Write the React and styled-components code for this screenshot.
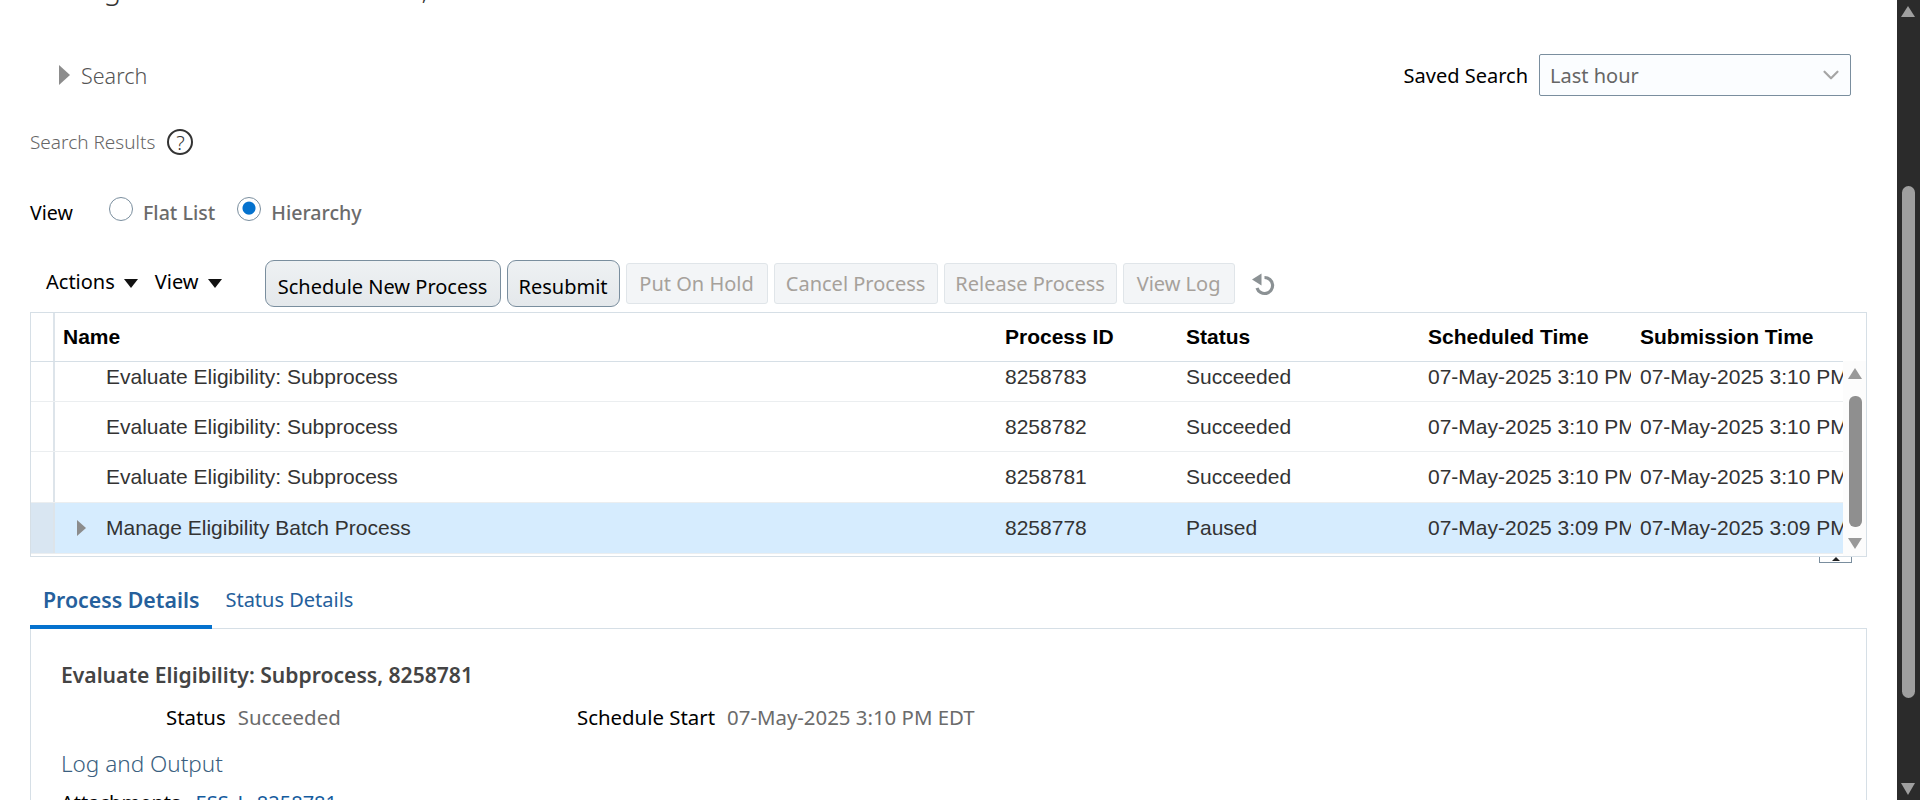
import React from "react";
import styled, { createGlobalStyle } from "styled-components";
import { ChevronDown } from "lucide-react";

const Global = createGlobalStyle`
  html, body {
    margin: 0;
    padding: 0;
    height: 800px;
    overflow: hidden;
    background: #fff;
  }
`;

const uiFont = `"Noto Sans", "Open Sans", sans-serif`;
const tableFont = `"Liberation Sans", Arial, sans-serif`;

const Page = styled.div`
  display: flex;
  width: 1920px;
  height: 800px;
  overflow: hidden;
  font-family: ${uiFont};
  color: #333;
`;

const Main = styled.main`
  flex: 1;
  min-width: 0;
  padding: 0 30px;
  overflow: hidden;
`;

const PageScrollbar = styled.div`
  width: 23px;
  flex: none;
  background: #2b2b2b;
  position: relative;
`;

const ScrollThumb = styled.div`
  position: absolute;
  left: 5px;
  width: 13px;
  top: 186px;
  height: 512px;
  border-radius: 7px;
  background: #9f9f9f;
`;

const ScrollArrow = styled.div`
  position: absolute;
  left: 4px;
  width: 0;
  height: 0;
  border-left: 7.5px solid transparent;
  border-right: 7.5px solid transparent;
  ${(p) =>
    p.$up
      ? "top: 6px; border-bottom: 11px solid #9f9f9f;"
      : "bottom: 5px; border-top: 12px solid #9f9f9f;"}
`;

const PageTitle = styled.h1`
  margin: -33px 0 0;
  height: 41px;
  font-size: 29px;
  font-weight: 300;
  line-height: 41px;
  color: #333;
`;

const SearchBar = styled.div`
  display: flex;
  align-items: center;
  justify-content: space-between;
  height: 42px;
  margin-top: 46px;
  padding: 0 16px 0 29px;
`;

const Disclosure = styled.div`
  display: flex;
  align-items: center;
  gap: 11px;
  font-size: 21.5px;
  font-weight: 300;
  color: #555;
`;

const TriangleRight = styled.span`
  width: 0;
  height: 0;
  border-top: ${(p) => p.$size}px solid transparent;
  border-bottom: ${(p) => p.$size}px solid transparent;
  border-left: ${(p) => p.$size * 1.15}px solid #8c8c8c;
`;

const SavedSearch = styled.div`
  display: flex;
  align-items: center;
  gap: 11px;
  font-size: 20px;
  color: #000;
`;

const SelectBox = styled.div`
  display: flex;
  align-items: center;
  justify-content: space-between;
  box-sizing: border-box;
  width: 312px;
  height: 42px;
  padding: 0 6px 0 10px;
  background: #fbfdff;
  border: 1px solid #7a8e9e;
  border-radius: 2px;
  color: #666;
`;

const ResultsHead = styled.div`
  display: flex;
  align-items: center;
  gap: 12px;
  height: 26px;
  margin-top: 33px;
  font-size: 19px;
  font-weight: 300;
  color: #666;
`;

const HelpIcon = styled.span`
  display: inline-flex;
  align-items: center;
  justify-content: center;
  box-sizing: border-box;
  width: 26px;
  height: 26px;
  border: 2px solid #333;
  border-radius: 50%;
  font-size: 20px;
  font-weight: 300;
  color: #333;
`;

const ViewRow = styled.div`
  display: flex;
  align-items: center;
  height: 30px;
  margin-top: 42px;
  font-size: 19.6px;
`;

const ViewLabel = styled.span`
  width: 79px;
  color: #000;
`;

const Radio = styled.label`
  display: flex;
  align-items: center;
  gap: 10px;
  margin-right: 22px;
  font-weight: 500;
  color: #6b6b6b;
`;

const RadioDot = styled.span`
  box-sizing: border-box;
  width: 24px;
  height: 24px;
  border: 1px solid #7a8e9e;
  border-radius: 50%;
  margin-top: -6px;
  background: ${(p) =>
    p.$checked ? "radial-gradient(circle at 50% 46%, #0572ce 0 6px, #fff 7px)" : "#fff"};
`;

const Toolbar = styled.div`
  display: flex;
  align-items: center;
  height: 47px;
  margin-top: 33px;
`;

const MenuItem = styled.span`
  display: flex;
  align-items: center;
  gap: 9px;
  margin-left: ${(p) => p.$left}px;
  font-size: 20px;
  color: #000;
  margin-top: -4px;
`;

const TriangleDown = styled.span`
  width: 0;
  height: 0;
  border-left: 7px solid transparent;
  border-right: 7px solid transparent;
  border-top: 9px solid #111;
  margin-top: 3px;
`;

const ButtonRow = styled.div`
  display: flex;
  align-items: center;
  gap: 6px;
  margin-left: 43px;
`;

const ActiveButton = styled.button`
  box-sizing: border-box;
  height: 47px;
  width: ${(p) => p.$w}px;
  padding: 5px 0 0;
  background: linear-gradient(#eef1f3, #e4e8eb);
  border: 1px solid #7a8e9e;
  border-radius: 9px;
  font-family: ${uiFont};
  font-size: 20px;
  color: #000;
`;

const DisabledButton = styled.button`
  box-sizing: border-box;
  height: 41px;
  width: ${(p) => p.$w}px;
  padding: 0;
  background: #f3f5f7;
  border: 1px solid #e0e5e9;
  border-radius: 3px;
  font-family: ${uiFont};
  font-size: 20px;
  color: #a6a19b;
`;

const RefreshIcon = styled.svg`
  width: 24px;
  height: 24px;
  margin-left: 10px;
  margin-top: 1px;
`;

const TableBox = styled.section`
  position: relative;
  box-sizing: border-box;
  height: 245px;
  margin-top: 5px;
  border: 1px solid #d6dfe6;
  font-family: ${tableFont};
  font-size: 21px;
`;

const Row = styled.div`
  display: grid;
  grid-template-columns: 24px 950px 181px 242px 212px 1fr;
  box-sizing: border-box;
  height: ${(p) => p.$h}px;
  align-items: center;
  border-bottom: 1px solid ${(p) => (p.$head ? "#d6dfe6" : "#ebeef0")};
  background: ${(p) => (p.$selected ? "#d6ecfe" : "transparent")};
  color: ${(p) => (p.$head ? "#000" : "#333")};
  font-weight: ${(p) => (p.$head ? 700 : 400)};
`;

const Gutter = styled.div`
  align-self: stretch;
  border-right: 2px solid #dde4ea;
  background: ${(p) => (p.$selected ? "#d9e6f2" : "transparent")};
`;

const Cell = styled.div`
  overflow: hidden;
  white-space: nowrap;
  padding-left: ${(p) => p.$pad || 0}px;
  display: flex;
  align-items: center;
  margin-top: ${(p) => p.$shift || 0}px;
  margin-right: ${(p) => p.$clip || 0}px;
`;

const Body = styled.div`
  width: 1812px;
`;

const NameIndent = styled.span`
  display: inline-flex;
  align-items: center;
  flex: none;
  width: 51px;
  padding-left: 22px;
  box-sizing: border-box;
`;

const InnerScrollbar = styled.div`
  position: absolute;
  top: 48px;
  right: 0;
  bottom: 0;
  width: 23px;
  background: #fcfcfc;
`;

const InnerThumb = styled.div`
  position: absolute;
  left: 6px;
  width: 13px;
  top: 35px;
  height: 131px;
  border-radius: 6px;
  background: #8f8f8f;
`;

const InnerArrow = styled.div`
  position: absolute;
  left: 5px;
  width: 0;
  height: 0;
  border-left: 7px solid transparent;
  border-right: 7px solid transparent;
  ${(p) =>
    p.$up
      ? "top: 7px; border-bottom: 11px solid #999;"
      : "bottom: 7px; border-top: 11px solid #999;"}
`;

const SplitterTab = styled.div`
  position: absolute;
  right: 14px;
  bottom: -7px;
  width: 33px;
  height: 6px;
  border: 1px solid #7a8e9e;
  border-top: none;
  box-sizing: border-box;
  display: flex;
  justify-content: center;
  &::after {
    content: "";
    width: 0;
    height: 0;
    border-left: 4px solid transparent;
    border-right: 4px solid transparent;
    border-bottom: 4px solid #222;
  }
`;

const Tabs = styled.div`
  display: flex;
  box-sizing: border-box;
  height: 72px;
  align-items: flex-end;
  border-bottom: 1px solid #d6dfe6;
`;

const Tab = styled.div`
  box-sizing: border-box;
  height: 44px;
  padding: 0 13px;
  margin-bottom: -1px;
  color: #25609c;
  line-height: 29px;
  font-size: ${(p) => (p.$active ? "21.3px" : "20px")};
  font-weight: ${(p) => (p.$active ? 600 : 400)};
  border-bottom: ${(p) => (p.$active ? "4px solid #0572ce" : "none")};
`;

const Panel = styled.section`
  padding: 32px 30px 0;
  border-left: 1px solid #d6dfe6;
  border-right: 1px solid #d6dfe6;
  height: 200px;
`;

const DetailTitle = styled.h2`
  margin: 0;
  font-size: 21.1px;
  line-height: 27px;
  font-weight: 600;
  color: #444;
`;

const DetailRow = styled.div`
  display: flex;
  margin-top: 16px;
  line-height: 27px;
  font-size: 20.4px;
`;

const Field = styled.div`
  display: flex;
  gap: 12px;
  flex: none;
  width: ${(p) => p.$width}px;
  margin-left: ${(p) => p.$left || 0}px;
`;

const FieldLabel = styled.span`
  color: #000;
`;

const FieldValue = styled.span`
  color: #6b6b6b;
`;

const SubHead = styled.h3`
  margin: 18px 0 0;
  font-size: 22.5px;
  line-height: 29px;
  font-weight: 300;
  color: #3b5f80;
`;

const AttachRow = styled.div`
  display: flex;
  gap: 15px;
  margin-top: 11px;
  font-size: 20px;
  line-height: 27px;
  color: #000;
`;

const AttachLink = styled.a`
  color: #145c9e;
`;

const rows = [
  { name: "Evaluate Eligibility: Subprocess", id: "8258783", status: "Succeeded", time: "07-May-2025 3:10 PM EDT", h: 40, shift: -9 },
  { name: "Evaluate Eligibility: Subprocess", id: "8258782", status: "Succeeded", time: "07-May-2025 3:10 PM EDT", h: 50 },
  { name: "Evaluate Eligibility: Subprocess", id: "8258781", status: "Succeeded", time: "07-May-2025 3:10 PM EDT", h: 51 },
  { name: "Manage Eligibility Batch Process", id: "8258778", status: "Paused", time: "07-May-2025 3:09 PM EDT", h: 51, selected: true, expandable: true },
];

export default function App() {
  return (
    <Page>
      <Global />
      <Main>
        <PageTitle>Manage Scheduled Processes,</PageTitle>
        <SearchBar>
          <Disclosure>
            <TriangleRight $size={10} />
            Search
          </Disclosure>
          <SavedSearch>
            Saved Search
            <SelectBox>
              Last hour
              <ChevronDown size={26} color="#a5a5a5" />
            </SelectBox>
          </SavedSearch>
        </SearchBar>
        <ResultsHead>
          Search Results
          <HelpIcon>?</HelpIcon>
        </ResultsHead>
        <ViewRow>
          <ViewLabel>View</ViewLabel>
          <Radio>
            <RadioDot />
            Flat List
          </Radio>
          <Radio>
            <RadioDot $checked />
            Hierarchy
          </Radio>
        </ViewRow>
        <Toolbar>
          <MenuItem $left={16}>
            Actions
            <TriangleDown />
          </MenuItem>
          <MenuItem $left={17}>
            View
            <TriangleDown />
          </MenuItem>
          <ButtonRow>
            <ActiveButton $w={236}>Schedule New Process</ActiveButton>
            <ActiveButton $w={113}>Resubmit</ActiveButton>
            <DisabledButton $w={142}>Put On Hold</DisabledButton>
            <DisabledButton $w={164}>Cancel Process</DisabledButton>
            <DisabledButton $w={173}>Release Process</DisabledButton>
            <DisabledButton $w={112}>View Log</DisabledButton>
            <RefreshIcon viewBox="0 0 24 24">
              <path d="M13.5 5.5a8 8 0 1 1-7.5 10.5" fill="none" stroke="#8b9194" strokeWidth="3.2" />
              <path d="M1 7.5 L10.5 1.5 V13.5 Z" fill="#8b9194" />
            </RefreshIcon>
          </ButtonRow>
        </Toolbar>
        <TableBox>
          <Row $head $h={49}>
            <Gutter />
            <Cell $pad={8}>Name</Cell>
            <Cell>Process ID</Cell>
            <Cell>Status</Cell>
            <Cell>Scheduled Time</Cell>
            <Cell>Submission Time</Cell>
          </Row>
          <Body>
            {rows.map((r) => (
              <Row key={r.id} $h={r.h} $selected={r.selected}>
                <Gutter $selected={r.selected} />
                <Cell $shift={r.shift}>
                  <NameIndent>{r.expandable && <TriangleRight $size={8.5} />}</NameIndent>
                  <span>{r.name}</span>
                </Cell>
                <Cell $shift={r.shift}>{r.id}</Cell>
                <Cell $shift={r.shift}>{r.status}</Cell>
                <Cell $shift={r.shift} $clip={9}>{r.time}</Cell>
                <Cell $shift={r.shift}>{r.time}</Cell>
              </Row>
            ))}
          </Body>
          <InnerScrollbar>
            <InnerArrow $up />
            <InnerThumb />
            <InnerArrow />
          </InnerScrollbar>
          <SplitterTab />
        </TableBox>
        <Tabs>
          <Tab $active>Process Details</Tab>
          <Tab>Status Details</Tab>
        </Tabs>
        <Panel>
          <DetailTitle>Evaluate Eligibility: Subprocess, 8258781</DetailTitle>
          <DetailRow>
            <Field $left={105} $width={411}>
              <FieldLabel>Status</FieldLabel>
              <FieldValue>Succeeded</FieldValue>
            </Field>
            <Field $width={500}>
              <FieldLabel>Schedule Start</FieldLabel>
              <FieldValue>07-May-2025 3:10 PM EDT</FieldValue>
            </Field>
          </DetailRow>
          <SubHead>Log and Output</SubHead>
          <AttachRow>
            Attachments
            <AttachLink>ESS_L_8258781</AttachLink>
          </AttachRow>
        </Panel>
      </Main>
      <PageScrollbar>
        <ScrollArrow $up />
        <ScrollThumb />
        <ScrollArrow />
      </PageScrollbar>
    </Page>
  );
}
